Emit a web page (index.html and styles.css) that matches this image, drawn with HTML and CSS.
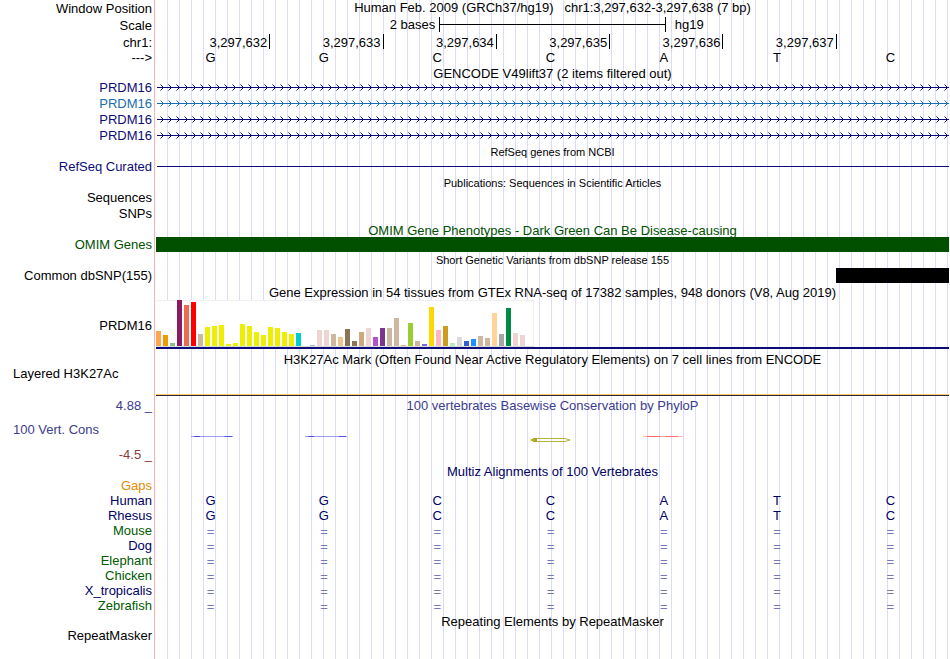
FILE: index.html
```
<!DOCTYPE html>
<html lang="en">
<head>
<meta charset="utf-8">
<title>Human chr1:3,297,632-3,297,638</title>
<link rel="stylesheet" href="styles.css">
</head>
<body>
<main class="browser">
  <div class="row heading"><div class="label">Window Position</div><h1 class="title">Human Feb. 2009 (GRCh37/hg19) &nbsp; chr1:3,297,632-3,297,638 (7 bp)</h1></div>
  <div class="row h17"><div class="label">Scale</div><div class="scale"><span>2 bases</span><span class="ruler"></span><span>hg19</span></div></div>
  <div class="row h17"><div class="label">chr1:</div><div class="ticks"><span>3,297,632</span><span>3,297,633</span><span>3,297,634</span><span>3,297,635</span><span>3,297,636</span><span>3,297,637</span></div></div>
  <div class="row"><div class="label">---&gt;</div><div class="bases top"><span>G</span><span>G</span><span>C</span><span>C</span><span>A</span><span>T</span><span>C</span></div></div>

  <div class="row h14"><h2 class="title">GENCODE V49lift37 (2 items filtered out)</h2></div>
  <div class="row navy"><div class="label">PRDM16</div><svg class="gene" height="16"><defs><pattern id="strand" width="8" height="16" patternUnits="userSpaceOnUse"><path class="chevron faint" d="M3 4h1v1h-1zM3 10h1v1h-1z"/><path class="chevron" d="M4 5h1v1h-1zM5 6h1v1h-1zM5 8h1v1h-1zM4 9h1v1h-1z"/><path class="intron" d="M0 7h8v1h-8z"/></pattern></defs><rect width="100%" height="16" fill="url(#strand)"/></svg></div>
  <div class="row blue"><div class="label">PRDM16</div><svg class="gene" height="16"><defs><pattern id="strand-blue" width="8" height="16" patternUnits="userSpaceOnUse"><path class="chevron faint" d="M3 4h1v1h-1zM3 10h1v1h-1z"/><path class="chevron" d="M4 5h1v1h-1zM5 6h1v1h-1zM5 8h1v1h-1zM4 9h1v1h-1z"/><path class="intron" d="M0 7h8v1h-8z"/></pattern></defs><rect width="100%" height="16" fill="url(#strand-blue)"/></svg></div>
  <div class="row navy"><div class="label">PRDM16</div><svg class="gene" height="16"><rect width="100%" height="16" fill="url(#strand)"/></svg></div>
  <div class="row navy"><div class="label">PRDM16</div><svg class="gene" height="16"><rect width="100%" height="16" fill="url(#strand)"/></svg></div>

  <div class="row h15"><h2 class="title small">RefSeq genes from NCBI</h2></div>
  <div class="row navy"><div class="label">RefSeq Curated</div><div class="thin-line"></div></div>

  <div class="row h15"><h2 class="title small">Publications: Sequences in Scientific Articles</h2></div>
  <div class="row"><div class="label">Sequences</div></div>
  <div class="row"><div class="label">SNPs</div></div>

  <div class="row h15 green"><h2 class="title">OMIM Gene Phenotypes - Dark Green Can Be Disease-causing</h2></div>
  <div class="row h15 green"><div class="label">OMIM Genes</div><div class="block omim"></div></div>

  <div class="row"><h2 class="title small">Short Genetic Variants from dbSNP release 155</h2></div>
  <div class="row h15"><div class="label">Common dbSNP(155)</div><div class="block snp"></div></div>

  <div class="row h17"><h2 class="title">Gene Expression in 54 tissues from GTEx RNA-seq of 17382 samples, 948 donors (V8, Aug 2019)</h2></div>
  <div class="row expression"><div class="label">PRDM16</div><div class="chart-area"><svg id="gtex" width="378" height="47" role="img" aria-label="PRDM16 expression by tissue"></svg></div></div>

  <div class="row h20"><h2 class="title">H3K27Ac Mark (Often Found Near Active Regulatory Elements) on 7 cell lines from ENCODE</h2></div>
  <div class="row histone"><div class="label left">Layered H3K27Ac</div><div class="signal"></div></div>

  <div class="row h18 violet"><div class="label">4.88 _</div><h2 class="title">100 vertebrates Basewise Conservation by PhyloP</h2></div>
  <div class="row h31 violet"><div class="label left">100 Vert. Cons</div>
    <svg class="phylop" height="31" viewBox="0 0 793 31" preserveAspectRatio="none" aria-hidden="true">
      <path fill="#9c9cf4" d="M35 22h42v1h-42zM149 22h42v1h-42z"/>
      <path fill="#5050dc" d="M38 22h6v1h-6zM69 22h7v1h-7zM152 22h6v1h-6zM183 22h7v1h-7z"/>
      <path fill="#a0a000" d="M374 26l4-2h3v4h-3z"/>
      <path fill="none" stroke="#b4b43c" d="M376 26l5-1.500h28l5 1.500-5 1.500h-28z"/>
      <path fill="#ffb0b0" d="M487 22h40v1h-40z"/>
      <path fill="#ff7070" d="M491 22h13v1h-13zM509 22h13v1h-13z"/>
    </svg></div>
  <div class="row h18 maroon"><div class="label">-4.5 _</div></div>

  <div class="row h15 ink"><h2 class="title">Multiz Alignments of 100 Vertebrates</h2></div>
  <div class="row h15 orange"><div class="label">Gaps</div></div>
  <div class="row h15 ink"><div class="label">Human</div><div class="bases"><span>G</span><span>G</span><span>C</span><span>C</span><span>A</span><span>T</span><span>C</span></div></div>
  <div class="row h15 ink"><div class="label">Rhesus</div><div class="bases"><span>G</span><span>G</span><span>C</span><span>C</span><span>A</span><span>T</span><span>C</span></div></div>
  <div class="row h15 forest"><div class="label">Mouse</div><div class="bases gap"><span>=</span><span>=</span><span>=</span><span>=</span><span>=</span><span>=</span><span>=</span></div></div>
  <div class="row h15 ink"><div class="label">Dog</div><div class="bases gap"><span>=</span><span>=</span><span>=</span><span>=</span><span>=</span><span>=</span><span>=</span></div></div>
  <div class="row h15 forest"><div class="label">Elephant</div><div class="bases gap"><span>=</span><span>=</span><span>=</span><span>=</span><span>=</span><span>=</span><span>=</span></div></div>
  <div class="row h15 forest"><div class="label">Chicken</div><div class="bases gap"><span>=</span><span>=</span><span>=</span><span>=</span><span>=</span><span>=</span><span>=</span></div></div>
  <div class="row h15 ink"><div class="label">X_tropicalis</div><div class="bases gap"><span>=</span><span>=</span><span>=</span><span>=</span><span>=</span><span>=</span><span>=</span></div></div>
  <div class="row h15 forest"><div class="label">Zebrafish</div><div class="bases gap"><span>=</span><span>=</span><span>=</span><span>=</span><span>=</span><span>=</span><span>=</span></div></div>

  <div class="row h15"><h2 class="title">Repeating Elements by RepeatMasker</h2></div>
  <div class="row h15"><div class="label">RepeatMasker</div></div>
</main>
<script src="chart.js"></script>
</body>
</html>
```
FILE: styles.css
```
* { box-sizing: border-box; }

body {
  margin: 0;
  background: #fff;
  color: #000;
  font-family: "Liberation Sans", Arial, sans-serif;
  font-size: 13px;
  line-height: 15px;
}

/* Guide lines every 12px behind the data column, with the pink divider at its left edge */
.browser {
  min-height: 100vh;
  padding-right: 1px;
  background:
    linear-gradient(#ffb0b0, #ffb0b0) 154px 0 / 1px 100% no-repeat,
    linear-gradient(#fff, #fff) 0 0 / 156px 100% no-repeat,
    repeating-linear-gradient(90deg, #fff 0 11px, #dcdcfa 11px 12px);
}

.row {
  display: grid;
  grid-template-columns: 152px minmax(0, 1fr);
  column-gap: 4px;
  height: 16px;
  align-items: center;
  white-space: nowrap;
}
.h14 { height: 14px; }
.h15 { height: 15px; }
.h17 { height: 17px; }
.h18 { height: 18px; }
.h20 { height: 20px; }
.h31 { height: 31px; }

.label { grid-column: 1; align-self: start; text-align: right; }
.heading .label, .h17 .label { align-self: end; }
.h18 .label, .h31 .label { align-self: center; }
.left { padding-left: 13px; text-align: left; }
.title {
  grid-column: 2;
  margin: 0;
  font-size: 13px;
  font-weight: 400;
  text-align: center;
}
.heading .title { align-self: start; }
.title.small { font-size: 11px; }
.title.small, .h15 .title { padding-top: 1px; }
.h17 .title { padding-top: 2px; }

.navy { color: #0c0c78; }
.blue { color: #1a6eb0; }
.green { color: #005000; }
.violet { color: #3c3c8c; }
.maroon { color: #8c3c3c; }
.ink { color: #000064; }
.orange { color: #e68a00; }
.forest { color: #005a00; }

.scale {
  display: grid;
  grid-template-columns: 1fr calc(200% / 7) 1fr;
  align-items: center;
}
.scale span:first-child { padding-right: 4px; text-align: right; }
.scale span:last-child { padding-left: 9px; }
.ruler {
  height: 15px;
  border: solid #000;
  border-width: 0 1px;
  background: linear-gradient(#000, #000) 0 7px / 100% 1px no-repeat;
}

.ticks, .bases {
  display: grid;
  grid-template-columns: repeat(7, 1fr);
}
.ticks { margin: 0 -1px 0 1px; }
.ticks span {
  height: 15px;
  padding-right: 2px;
  border-right: 1px solid #000;
  line-height: 17px;
  text-align: right;
}
.bases { margin: 0 2px 0 -2px; text-align: center; }
.top { align-self: start; }
.gap { padding-top: 1px; color: #7878b4; }

.gene { display: block; width: 100%; padding-left: 1px; }
.chevron, .intron { fill: #0c0c78; }
#strand-blue .chevron, #strand-blue .intron { fill: #1a6eb0; }
.faint { opacity: 0.5; }
.thin-line { align-self: start; height: 1px; margin: 7px 0 0 1px; background: #0c0c78; }

.block { height: 15px; }
.omim { background: #005000; }
.snp { width: calc(100% / 7); justify-self: end; background: #000; }

.expression { height: 49px; }
.expression .label { align-self: center; padding-top: 2px; }
.chart-area { height: 49px; border-bottom: 2px solid #0c0c78; }
.chart-area svg { display: block; }

.histone { height: 27px; line-height: 9px; }
.signal {
  align-self: end;
  height: 2px;
  border-top: 1px solid #ffc864;
  border-bottom: 1px solid #32283c;
}
.phylop { display: block; width: 100%; }
```
FILE: chart.js
```
// Median expression per tissue: [bar height, colour]
const tissues = [
  [15, "#ffa54f"], [11, "#ee9a00"], [3, "#8fbc8f"], [46, "#8b1c62"], [41, "#ee6a50"], [44, "#ff0000"],
  [12, "#cdb79e"], [19, "#eeee00"], [20, "#eeee00"], [21, "#eeee00"], [2, "#eeee00"], [3, "#eeee00"],
  [22, "#eeee00"], [20, "#eeee00"], [14, "#eeee00"], [11, "#eeee00"], [19, "#eeee00"], [18, "#eeee00"],
  [14, "#eeee00"], [12, "#eeee00"], [13, "#00cdcd"], [0, "#ee82ee"], [1, "#9ac0cd"], [16, "#eed5d2"],
  [16, "#eed5d2"], [12, "#cdb79e"], [9, "#eec591"], [17, "#8b7355"], [5, "#8b7355"], [14, "#cdaa7d"],
  [18, "#eed5d2"], [9, "#b452cd"], [18, "#7a378b"], [18, "#cdb79e"], [28, "#cdb79e"], [1, "#cdb79e"],
  [23, "#9acd32"], [5, "#cdb79e"], [2, "#7a67ee"], [39, "#ffd700"], [16, "#ffb6c1"], [20, "#cd9b1d"],
  [3, "#b4eeb4"], [9, "#d9d9d9"], [5, "#3a5fcd"], [7, "#1e90ff"], [10, "#cdb79e"], [8, "#cdb79e"],
  [33, "#ffd39b"], [12, "#a6a6a6"], [38, "#008b45"], [13, "#eed5d2"], [11, "#eed5d2"], [0, "#ff00ff"]
];
const svg = document.getElementById("gtex");
function rect(x, y, width, height, fill) {
  const r = document.createElementNS("http://www.w3.org/2000/svg", "rect");
  Object.entries({ x, y, width, height, fill }).forEach(([k, v]) => r.setAttribute(k, v));
  svg.appendChild(r);
}
rect(0, 0, 378, 47, "#f0f0f0");
rect(0, 1, 377, 45, "#ffffff");
rect(0, 46, 378, 1, "#dcdcdc");
tissues.forEach(([h, colour], i) => rect(i * 7, 46 - h, 5, h, colour));
```
